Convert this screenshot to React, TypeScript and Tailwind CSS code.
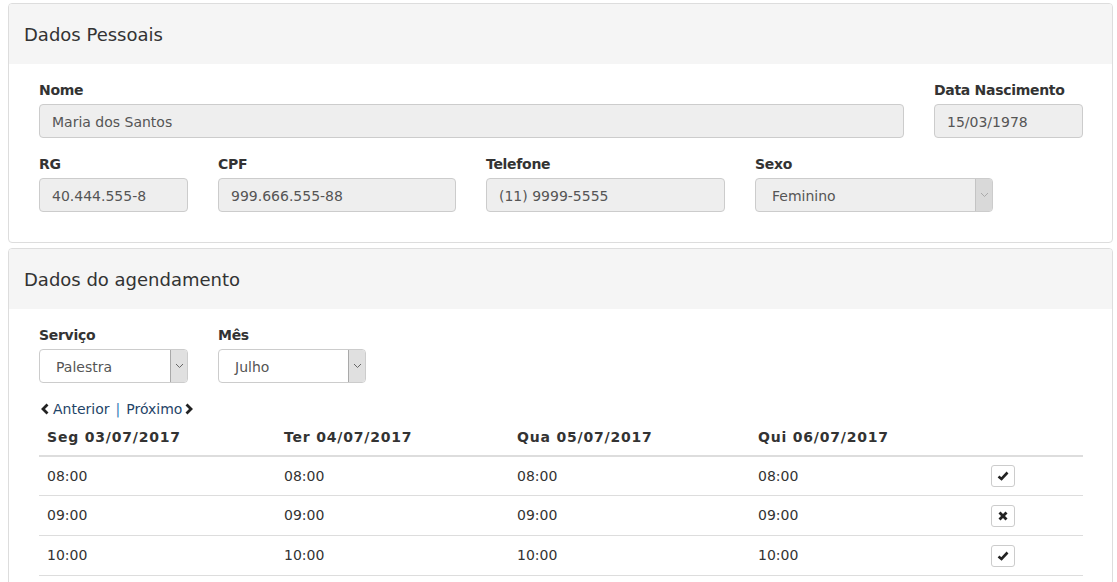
import React from "react";

const font = { fontFamily: '"DejaVu Sans", Verdana, sans-serif' };

function Label({ children }: { children: React.ReactNode }) {
  return <div className="text-[14px] leading-[20px] font-bold text-[#333] mb-[4px] tracking-[-0.3px]">{children}</div>;
}

function Input({ value, w }: { value: string; w?: string }) {
  return (
    <div className={`h-[34px] ${w ?? ""} bg-[#eee] border border-[#ccc] rounded-[4px] px-[12px] pt-[2px] flex items-center text-[14px] text-[#555]`}>
      {value}
    </div>
  );
}

function Select({ value, disabled }: { value: string; disabled?: boolean }) {
  return (
    <div
      className={`relative h-[34px] border border-[#ccc] rounded-[4px] pl-[16px] pt-[2px] flex items-center text-[14px] text-[#555] ${
        disabled ? "bg-[#eee]" : "bg-white"
      }`}
    >
      {value}
      <div
        className={`absolute right-0 top-0 bottom-0 w-[17px] rounded-r-[3px] border-l flex items-center justify-center ${
          disabled ? "bg-[#d9d9d9] border-[#c4c4c4]" : "bg-[#e0e0e0] border-[#a9a9a9]"
        }`}
      >
        <svg width="9" height="6" viewBox="0 0 9 6">
          <polyline points="1,1 4.5,4.5 8,1" fill="none" stroke={disabled ? "#aaa" : "#666"} strokeWidth="1" />
        </svg>
      </div>
    </div>
  );
}

function Panel({ title, children }: { title: string; children: React.ReactNode }) {
  return (
    <div className="border border-[#ddd] rounded-[4px] bg-white mb-[5px]">
      <div className="h-[60px] bg-[#f5f5f5] rounded-t-[3px] px-[15px] flex items-center text-[18px] text-[#333]">
        {title}
      </div>
      {children}
    </div>
  );
}

function Check() {
  return (
    <svg width="12" height="10" viewBox="0 0 12 10">
      <polyline points="1.5,5.5 4.5,8 10.5,1.5" fill="none" stroke="#222" strokeWidth="2.6" strokeLinejoin="miter" />
    </svg>
  );
}

function Cross() {
  return (
    <svg width="10" height="10" viewBox="0 0 10 10">
      <line x1="1.5" y1="1.5" x2="8.5" y2="8.5" stroke="#222" strokeWidth="2.8" />
      <line x1="8.5" y1="1.5" x2="1.5" y2="8.5" stroke="#222" strokeWidth="2.8" />
    </svg>
  );
}

const cols = ["w-[237px]", "w-[233px]", "w-[241px]", "w-[233px]"];
const heads = ["Seg 03/07/2017", "Ter 04/07/2017", "Qua 05/07/2017", "Qui 06/07/2017"];
const rows: { t: string; ok: boolean }[] = [
  { t: "08:00", ok: true },
  { t: "09:00", ok: false },
  { t: "10:00", ok: true },
];

export default function App() {
  return (
    <div style={font} className="h-[582px] overflow-hidden bg-white">
      <div className="pt-[3px] px-[8px] w-[1121px]">
        <Panel title="Dados Pessoais">
          <div className="pl-[30px] pr-[29px] pt-[16px] pb-[30px]">
            <div className="flex gap-[30px]">
              <div className="flex-1">
                <Label>Nome</Label>
                <Input value="Maria dos Santos" />
              </div>
              <div className="w-[149px]">
                <Label>Data Nascimento</Label>
                <Input value="15/03/1978" />
              </div>
            </div>
            <div className="flex gap-[30px] mt-[16px]">
              <div className="w-[149px]">
                <Label>RG</Label>
                <Input value="40.444.555-8" />
              </div>
              <div className="w-[238px]">
                <Label>CPF</Label>
                <Input value="999.666.555-88" />
              </div>
              <div className="w-[239px]">
                <Label>Telefone</Label>
                <Input value="(11) 9999-5555" />
              </div>
              <div className="w-[238px]">
                <Label>Sexo</Label>
                <Select value="Feminino" disabled />
              </div>
            </div>
          </div>
        </Panel>
        <Panel title="Dados do agendamento">
          <div className="pl-[30px] pr-[29px] pt-[16px] pb-[30px]">
            <div className="flex gap-[30px]">
              <div className="w-[149px]">
                <Label>Serviço</Label>
                <Select value="Palestra" />
              </div>
              <div className="w-[148px]">
                <Label>Mês</Label>
                <Select value="Julho" />
              </div>
            </div>
            <div className="mt-[16px] h-[20px] flex items-center text-[14px] text-[#1f4468]">
              <svg width="10" height="12" viewBox="0 0 10 12" className="mr-[3px] ml-[1px]">
                <polyline points="7.5,1.5 3,6 7.5,10.5" fill="none" stroke="#222" strokeWidth="2.8" />
              </svg>
              <span>Anterior</span>
              <span className="text-[#337ab7] mx-[6px]">|</span>
              <span>Próximo</span>
              <svg width="10" height="12" viewBox="0 0 10 12" className="ml-[2px]">
                <polyline points="2.5,1.5 7,6 2.5,10.5" fill="none" stroke="#222" strokeWidth="2.8" />
              </svg>
            </div>
            <div className="flex border-b-2 border-[#ddd] text-[14px] leading-[20px] font-bold text-[#333] tracking-[0.8px]">
              {heads.map((h, i) => (
                <div key={h} className={`${cols[i]} p-[8px]`}>
                  {h}
                </div>
              ))}
              <div className="flex-1 p-[8px]" />
            </div>
            {rows.map((r, idx) => (
              <div
                key={r.t}
                className={`flex items-center text-[14px] text-[#333] border-b border-[#ddd] ${idx === 0 ? "h-[39px]" : "h-[40px]"}`}
              >
                {cols.map((c, i) => (
                  <div key={i} className={`${c} px-[8px]`}>
                    {r.t}
                  </div>
                ))}
                <div className="flex-1 px-[8px]">
                  <div className="w-[24px] h-[22px] border border-[#ccc] rounded-[3px] bg-white flex items-center justify-center">
                    {r.ok ? <Check /> : <Cross />}
                  </div>
                </div>
              </div>
            ))}
          </div>
        </Panel>
      </div>
    </div>
  );
}
